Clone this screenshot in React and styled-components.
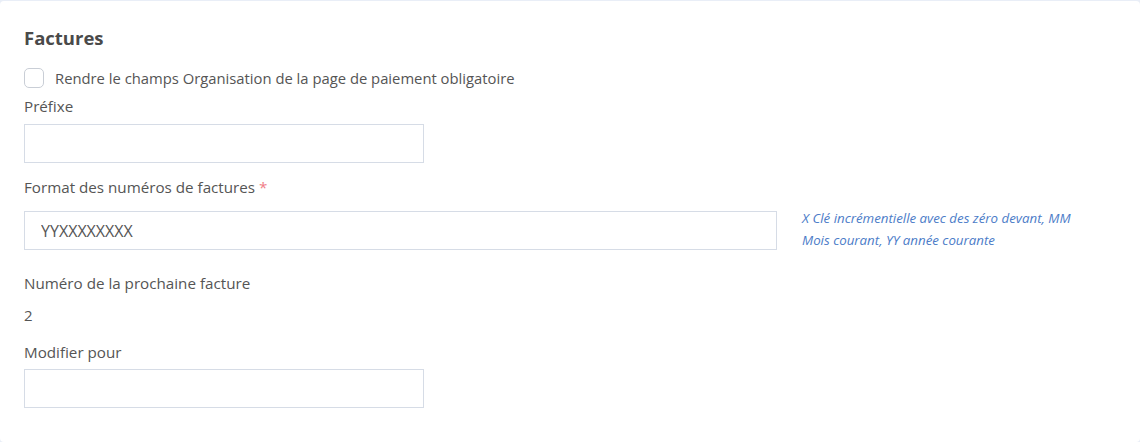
import React from "react";
import styled, { createGlobalStyle } from "styled-components";

const GlobalStyle = createGlobalStyle`
  html, body {
    margin: 0;
    padding: 0;
    background: #e9eef7;
  }
  * {
    box-sizing: border-box;
  }
`;

const Card = styled.div`
  margin-top: 1px;
  width: 1140px;
  height: 441px;
  background: #fff;
  border-radius: 4px;
  padding: 25px 24px 0 24px;
  font-family: "Open Sans", "Liberation Sans", sans-serif;
  color: #555;
`;

const Title = styled.h2`
  margin: 0 0 18px 0;
  font-size: 18.5px;
  font-weight: 700;
  color: #4a4a4a;
  line-height: 24px;
`;

const CheckRow = styled.label`
  display: flex;
  align-items: center;
  gap: 11px;
  font-size: 14.8px;
  color: #555;
  height: 20px;
`;

const Box = styled.span`
  width: 20px;
  height: 20px;
  flex: none;
  border: 1px solid #c9ced6;
  border-radius: 5px;
  background: #fff;
`;

const Field = styled.div`
  display: flex;
  flex-direction: column;
  margin-top: ${(p) => p.$top || 0}px;
`;

const Label = styled.div`
  font-size: 15.2px;
  font-weight: 500;
  color: #555;
  line-height: 20px;
  margin-bottom: ${(p) => p.$gap || 0}px;
`;

const Star = styled.span`
  color: #f07d86;
  margin-left: 4px;
`;

const Row = styled.div`
  display: flex;
  align-items: flex-start;
  gap: 25px;
`;

const Input = styled.input`
  width: ${(p) => p.$w}px;
  height: 39px;
  border: 1px solid #d6dce6;
  border-radius: 0;
  padding: 0 16px;
  font-family: inherit;
  font-size: 16px;
  color: #555;
  outline: none;
  background: #fff;
`;

const Hint = styled.div`
  width: 290px;
  font-size: 13.3px;
  font-style: italic;
  color: #4c7cc8;
  line-height: 22px;
  margin-top: -4px;
`;

const Value = styled.div`
  font-size: 15px;
  color: #555;
  line-height: 20px;
  margin-top: 12px;
`;

export default function App() {
  return (
    <>
      <GlobalStyle />
      <Card>
        <Title>Factures</Title>
        <CheckRow>
          <Box />
          Rendre le champs Organisation de la page de paiement obligatoire
        </CheckRow>
        <Field $top={8}>
          <Label $gap={8}>Préfixe</Label>
          <Input $w={400} />
        </Field>
        <Field $top={14}>
          <Label $gap={14}>
            Format des numéros de factures<Star>*</Star>
          </Label>
          <Row>
            <Input $w={753} defaultValue="YYXXXXXXXX" />
            <Hint>
              X Clé incrémentielle avec des zéro devant, MM Mois courant, YY
              année courante
            </Hint>
          </Row>
        </Field>
        <Field $top={22}>
          <Label>Numéro de la prochaine facture</Label>
          <Value>2</Value>
        </Field>
        <Field $top={17}>
          <Label $gap={7}>Modifier pour</Label>
          <Input $w={400} />
        </Field>
      </Card>
    </>
  );
}
